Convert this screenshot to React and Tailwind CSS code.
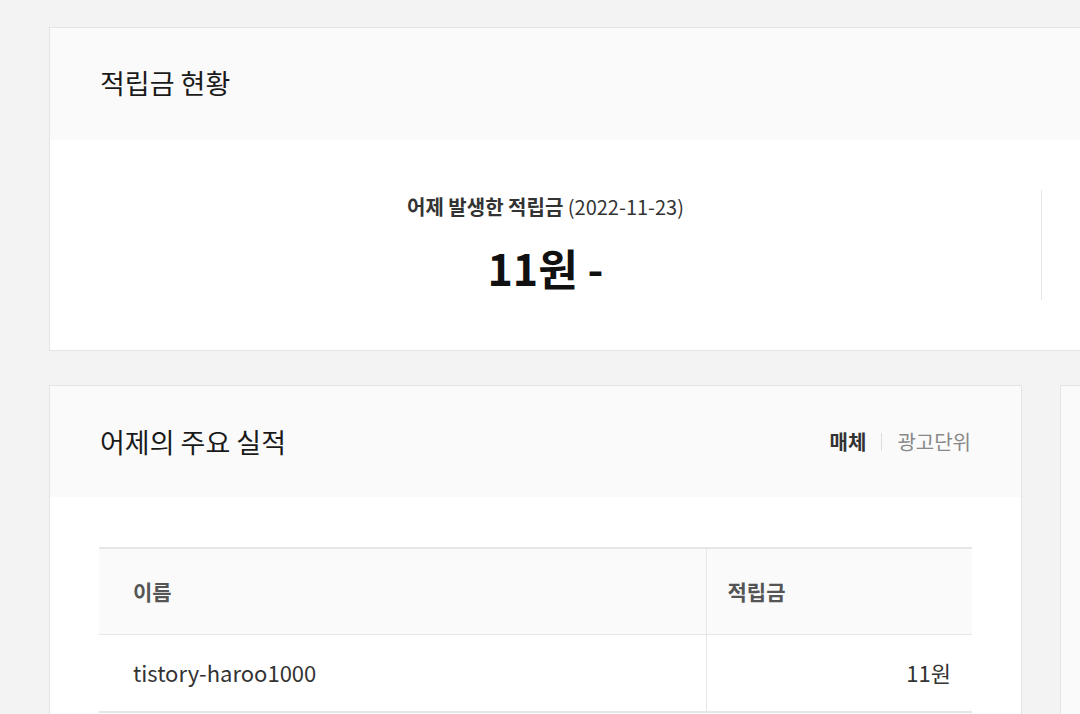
export default function App() {
  const rows = [{ name: "tistory-haroo1000", amount: "11원" }];

  return (
    <div
      className="w-[1080px] h-[714px] overflow-hidden bg-[#f3f3f3] pl-[49px] pt-[27px] text-[#222]"
      style={{ fontFamily: '"Noto Sans CJK KR", "Noto Sans", sans-serif' }}
    >
      {/* 적립금 현황 */}
      <div className="w-[1120px] border border-[#e4e4e4] bg-white">
        <div className="h-[112px] bg-[#fafafa] px-[50px] pb-[4px] flex items-center">
          <h2 className="text-[27px] leading-none text-[#1a1a1a]">적립금 현황</h2>
        </div>
        <div className="flex py-[50px]">
          <div className="w-[991px] flex flex-col items-center">
            <p className="text-[20px] leading-[33px] text-[#333]">
              <span className="font-bold">어제 발생한 적립금</span> (2022-11-23)
            </p>
            <p className="mt-[19px] text-[43px] leading-[50px] font-bold text-[#111]">
              11원 -
            </p>
          </div>
          <div className="w-px h-[110px] bg-[#e6e6e6]" />
        </div>
      </div>

      <div className="flex gap-[38px] mt-[34px]">
        {/* 어제의 주요 실적 */}
        <div className="w-[973px] shrink-0 border border-[#e4e4e4] bg-white">
          <div className="h-[111px] bg-[#fafafa] px-[50px] flex items-center justify-between">
            <h2 className="text-[27px] leading-none text-[#1a1a1a]">어제의 주요 실적</h2>
            <div className="flex items-center text-[20px]">
              <span className="font-bold text-[#333]">매체</span>
              <span className="mx-[15px] w-px h-[18px] bg-[#ddd]" />
              <span className="text-[#888]">광고단위</span>
            </div>
          </div>
          <div className="px-[49px] pt-[50px] pb-[40px]">
            <table className="w-full border-collapse">
              <thead>
                <tr className="bg-[#fafafa] border-t-2 border-[#e6e6e6]">
                  <th className="w-[607px] h-[86px] pl-[34px] text-left text-[21px] font-bold text-[#555] border-r border-[#e6e6e6]">
                    이름
                  </th>
                  <th className="h-[86px] pl-[21px] text-left text-[21px] font-bold text-[#555]">
                    적립금
                  </th>
                </tr>
              </thead>
              <tbody>
                {rows.map((r) => (
                  <tr key={r.name} className="border-t border-b-2 border-[#e6e6e6]">
                    <td className="h-[78px] pl-[34px] text-[22px] text-[#333] border-r border-[#e6e6e6]">
                      {r.name}
                    </td>
                    <td className="h-[78px] pr-[21px] text-right text-[22px] text-[#333]">
                      {r.amount}
                    </td>
                  </tr>
                ))}
              </tbody>
            </table>
          </div>
        </div>

        <div className="w-[300px] h-[500px] shrink-0 border border-[#e4e4e4] bg-[#fafafa]" />
      </div>
    </div>
  );
}
